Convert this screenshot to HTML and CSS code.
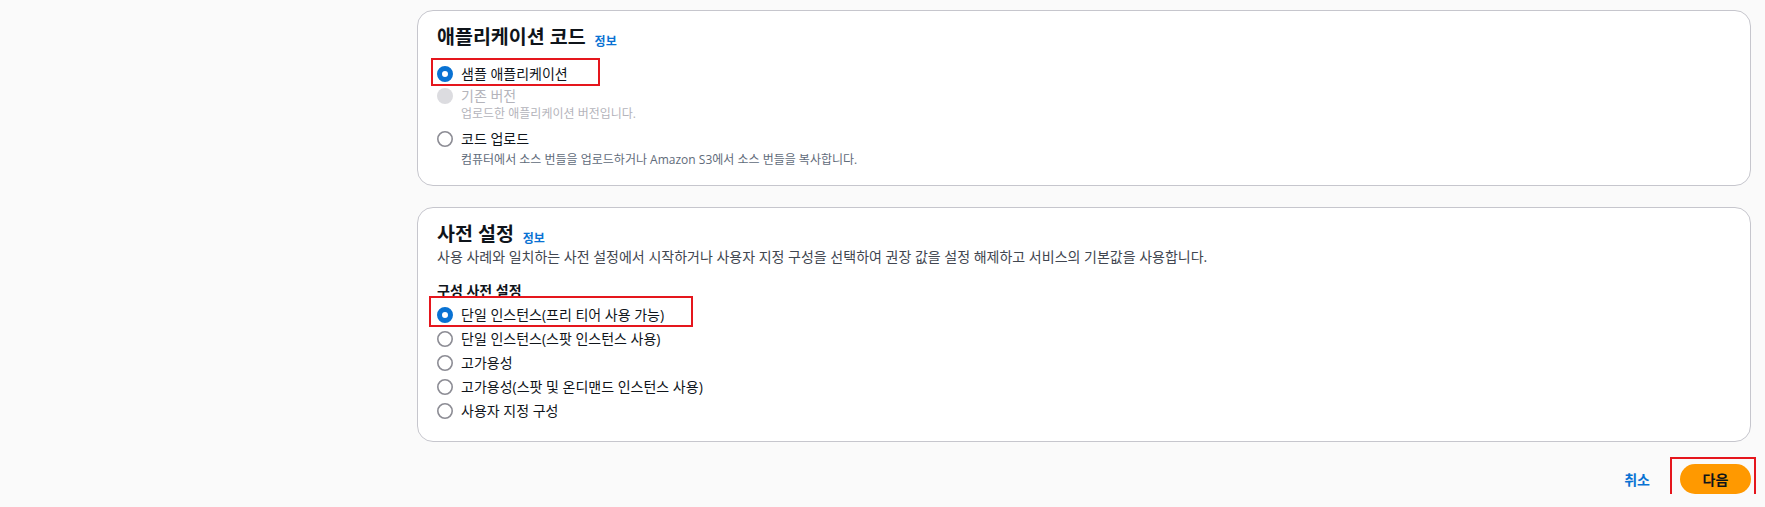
FILE: index.html
```html
<!DOCTYPE html>
<html lang="ko">
<head>
<meta charset="utf-8">
<title>애플리케이션 구성</title>
<link rel="stylesheet" href="styles.css">
</head>
<body>
<div class="page">
  <aside class="nav-space"></aside>
  <main class="content">
    <section class="card card-code">
      <div class="card-header">
        <h2 class="card-title">애플리케이션 코드</h2>
        <a class="info-link" href="#">정보</a>
      </div>
      <div class="radio-group group-code">
        <div class="radio">
          <span class="radio-control"><svg viewBox="0 0 16 16" width="16" height="16"><circle cx="8" cy="8" r="5.5" fill="#fff" stroke="#0972d3" stroke-width="5"/></svg></span>
          <span class="radio-text"><span class="radio-label">샘플 애플리케이션</span></span>
          <span class="annotate annotate-sample"></span>
        </div>
        <div class="radio radio-disabled">
          <span class="radio-control"><svg viewBox="0 0 16 16" width="16" height="16"><circle cx="8" cy="8" r="8" fill="#dcdce0"/></svg></span>
          <span class="radio-text">
            <span class="radio-label">기존 버전</span>
            <span class="radio-desc">업로드한 애플리케이션 버전입니다.</span>
          </span>
        </div>
        <div class="radio radio-spaced">
          <span class="radio-control"><svg viewBox="0 0 16 16" width="16" height="16"><circle cx="8" cy="8" r="7.2" fill="#fff" stroke="#8c8c94" stroke-width="1.6"/></svg></span>
          <span class="radio-text">
            <span class="radio-label">코드 업로드</span>
            <span class="radio-desc">컴퓨터에서 소스 번들을 업로드하거나 Amazon S3에서 소스 번들을 복사합니다.</span>
          </span>
        </div>
      </div>
    </section>

    <section class="card card-presets">
      <div class="card-header">
        <h2 class="card-title">사전 설정</h2>
        <a class="info-link" href="#">정보</a>
      </div>
      <p class="card-desc">사용 사례와 일치하는 사전 설정에서 시작하거나 사용자 지정 구성을 선택하여 권장 값을 설정 해제하고 서비스의 기본값을 사용합니다.</p>
      <div class="field-label">구성 사전 설정</div>
      <div class="radio-group group-presets">
        <div class="radio">
          <span class="radio-control"><svg viewBox="0 0 16 16" width="16" height="16"><circle cx="8" cy="8" r="5.5" fill="#fff" stroke="#0972d3" stroke-width="5"/></svg></span>
          <span class="radio-text"><span class="radio-label">단일 인스턴스(프리 티어 사용 가능)</span></span>
          <span class="annotate annotate-preset"></span>
        </div>
        <div class="radio">
          <span class="radio-control"><svg viewBox="0 0 16 16" width="16" height="16"><circle cx="8" cy="8" r="7.2" fill="#fff" stroke="#8c8c94" stroke-width="1.6"/></svg></span>
          <span class="radio-text"><span class="radio-label">단일 인스턴스(스팟 인스턴스 사용)</span></span>
        </div>
        <div class="radio">
          <span class="radio-control"><svg viewBox="0 0 16 16" width="16" height="16"><circle cx="8" cy="8" r="7.2" fill="#fff" stroke="#8c8c94" stroke-width="1.6"/></svg></span>
          <span class="radio-text"><span class="radio-label">고가용성</span></span>
        </div>
        <div class="radio">
          <span class="radio-control"><svg viewBox="0 0 16 16" width="16" height="16"><circle cx="8" cy="8" r="7.2" fill="#fff" stroke="#8c8c94" stroke-width="1.6"/></svg></span>
          <span class="radio-text"><span class="radio-label">고가용성(스팟 및 온디맨드 인스턴스 사용)</span></span>
        </div>
        <div class="radio">
          <span class="radio-control"><svg viewBox="0 0 16 16" width="16" height="16"><circle cx="8" cy="8" r="7.2" fill="#fff" stroke="#8c8c94" stroke-width="1.6"/></svg></span>
          <span class="radio-text"><span class="radio-label">사용자 지정 구성</span></span>
        </div>
      </div>
    </section>

    <div class="actions">
      <a class="cancel-link" href="#">취소</a>
      <div class="primary-wrap">
        <button class="primary-btn" type="button">다음</button>
        <span class="annotate annotate-next"></span>
      </div>
    </div>
  </main>
</div>
</body>
</html>
```

FILE: styles.css
```css
html, body {
  margin: 0;
  padding: 0;
  background: #fafafa;
}

body {
  font-family: "Open Sans", "Noto Sans CJK KR", sans-serif;
  color: #0f141a;
  font-size: 14px;
}

.page {
  display: flex;
  padding-top: 10px;
  padding-right: 14px;
}

.nav-space {
  width: 417px;
  flex: none;
}

.content {
  flex: 1;
  display: flex;
  flex-direction: column;
}

.card {
  background: #fff;
  border: 1px solid #c6c6cd;
  border-radius: 16px;
  padding: 15px 19px 17px;
}

.card-presets {
  margin-top: 21px;
  padding-bottom: 19px;
}

.card-header {
  display: flex;
  align-items: flex-start;
  height: 22px;
}

.card-title {
  margin: 0;
  font-size: 19.5px;
  line-height: 22px;
  font-weight: 700;
  color: #0f141a;
}

.info-link {
  margin-left: 9px;
  margin-top: 9px;
  font-size: 12px;
  line-height: 13px;
  font-weight: 700;
  color: #0972d3;
  text-decoration: none;
}

.card-desc {
  margin: 2px 0 0;
  font-size: 14px;
  line-height: 20px;
  color: #414650;
}

.field-label {
  margin-top: 13px;
  font-size: 14px;
  line-height: 22px;
  font-weight: 700;
  color: #0f141a;
}

.radio-group {
  display: flex;
  flex-direction: column;
}

.group-code {
  margin-top: 15px;
}

.group-presets {
  margin-top: 2px;
  gap: 2px;
}

.radio {
  position: relative;
  display: flex;
  align-items: flex-start;
}

.radio-spaced {
  margin-top: 6px;
}

.radio-control {
  flex: none;
  width: 16px;
  height: 16px;
  margin-top: 3px;
  margin-right: 8px;
  display: flex;
}

.radio-text {
  display: flex;
  flex-direction: column;
}

.radio-label {
  font-size: 14px;
  line-height: 22px;
  color: #0f141a;
}

.radio-desc {
  margin-top: -1px;
  font-size: 12px;
  line-height: 16px;
  color: #5f6b7a;
}

.radio-spaced .radio-desc {
  margin-top: 2px;
}

.radio-disabled .radio-label,
.radio-disabled .radio-desc {
  color: #b4b4bb;
}

.annotate {
  position: absolute;
  box-sizing: border-box;
  border: 2px solid #e5161d;
  pointer-events: none;
}

.annotate-sample {
  left: -6px;
  top: -5px;
  width: 169px;
  height: 28px;
}

.annotate-preset {
  left: -8px;
  top: -8px;
  width: 264px;
  height: 31px;
}

.actions {
  margin-top: 22px;
  display: flex;
  justify-content: flex-end;
  align-items: center;
}

.cancel-link {
  font-size: 14px;
  font-weight: 700;
  color: #0972d3;
  text-decoration: none;
  margin-right: 30px;
}

.primary-wrap {
  position: relative;
  display: flex;
}

.primary-btn {
  width: 71px;
  height: 30px;
  border: none;
  border-radius: 16px;
  background: #ff9900;
  color: #0f141a;
  font-family: "Open Sans", "Noto Sans CJK KR", sans-serif;
  font-size: 14px;
  font-weight: 700;
  padding: 0;
}

.annotate-next {
  left: -10px;
  top: -7px;
  width: 86px;
  height: 40px;
}
```
